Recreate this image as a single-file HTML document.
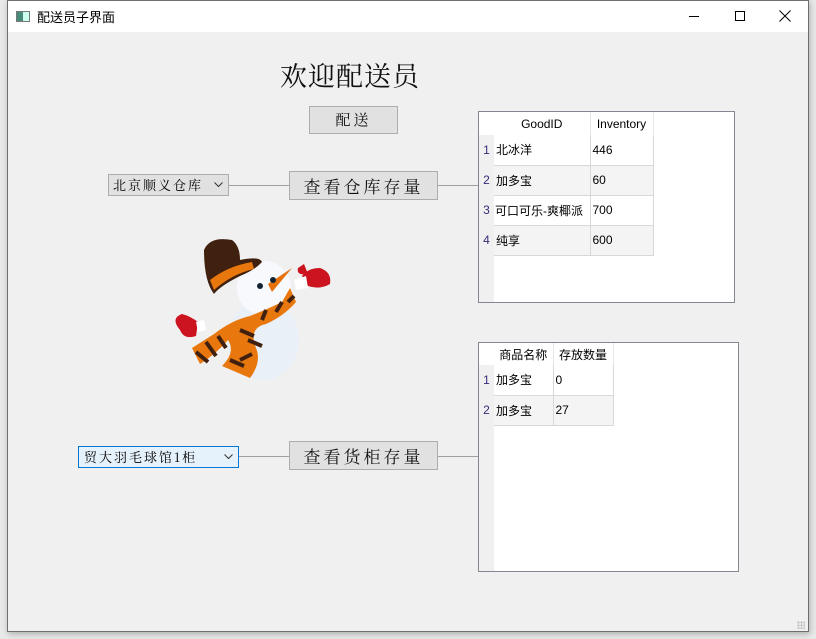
<!DOCTYPE html>
<html><head><meta charset="utf-8"><style>
body{margin:0;width:816px;height:639px;background:#e9e9e9;position:relative;overflow:hidden;font-family:"Liberation Sans","Noto Sans CJK SC",sans-serif;}
.win{position:absolute;left:7px;top:0;width:800px;height:630px;border:1px solid #6f6f6f;background:#f0f0f0;box-shadow:1px 2px 6px rgba(0,0,0,.25);}
.tb{position:absolute;left:0;top:0;width:800px;height:31px;background:#fff;}
.ab{position:absolute;box-sizing:border-box;}
.k{font-family:"Noto Serif CJK SC","AR PL UKai CN",serif;}
.btn{position:absolute;box-sizing:border-box;border:1px solid #adadad;background:#e1e1e1;text-align:center;color:#111;}
.ln{position:absolute;height:1px;background:#a0a0a0;}
table{border-collapse:collapse;font-size:12px;table-layout:fixed;}
td{box-sizing:border-box;padding:0 0 0 2px;border-right:1px solid #d8d8d8;border-bottom:1px solid #d8d8d8;color:#000;white-space:nowrap;overflow:hidden;}
th{font-weight:normal;font-size:12px;border-right:1px solid #e8e8e8;background:#fff;padding:0;}
.vh{background:#f0f0f0;border:none;color:#3a2a7a;padding:0;text-align:center;}
.chev{position:absolute;right:5px;top:7px;}
</style></head><body>
<div class="win">
 <div class="tb">
  <div class="ab" style="left:8px;top:10px;width:14px;height:11px;border:1px solid #777;background:linear-gradient(90deg,#4a8a7a 0 50%,#cfe 50%);"></div>
  <div class="ab" style="left:29px;top:6px;font-size:13px;color:#000;">配送员子界面</div>
  <div class="ab" style="left:681px;top:15px;width:10px;height:1px;background:#000;"></div>
  <div class="ab" style="left:727px;top:10px;width:10px;height:10px;border:1px solid #000;"></div>
  <svg class="ab" style="left:771px;top:9px" width="12" height="12"><path d="M0.5 0.5L11.5 11.5M11.5 0.5L0.5 11.5" stroke="#000" stroke-width="1"/></svg>
 </div>
</div>
<div class="ab k" style="left:280px;top:55px;font-size:27px;letter-spacing:1px;color:#111;">欢迎配送员</div>
<div class="btn k" style="left:309px;top:106px;width:89px;height:28px;font-size:15px;line-height:26px;letter-spacing:3px;">配送</div>

<div class="ab k" style="left:108px;top:174px;width:121px;height:22px;border:1px solid #adadad;background:#e1e1e1;font-size:13px;line-height:20px;padding-left:4px;letter-spacing:2px;">北京顺义仓库<svg class="chev" width="9" height="6"><path d="M0.5 0.5L4.5 4.5L8.5 0.5" stroke="#333" fill="none"/></svg></div>
<div class="ln" style="left:229px;top:185px;width:60px;"></div>
<div class="btn k" style="left:289px;top:171px;width:149px;height:29px;font-size:17px;line-height:27px;letter-spacing:3px;">查看仓库存量</div>
<div class="ln" style="left:438px;top:185px;width:40px;"></div>

<div class="ab k" style="left:78px;top:446px;width:161px;height:22px;border:1px solid #0078d7;background:#e5f1fb;font-size:13px;line-height:20px;padding-left:5px;letter-spacing:2px;">贸大羽毛球馆1柜<svg class="chev" width="9" height="6"><path d="M0.5 0.5L4.5 4.5L8.5 0.5" stroke="#333" fill="none"/></svg></div>
<div class="ln" style="left:239px;top:456px;width:50px;"></div>
<div class="btn k" style="left:289px;top:441px;width:149px;height:29px;font-size:17px;line-height:27px;letter-spacing:3px;">查看货柜存量</div>
<div class="ln" style="left:438px;top:456px;width:40px;"></div>

<div class="ab" style="left:478px;top:111px;width:257px;height:192px;border:1px solid #828790;background:#fff;">
 <div class="ab" style="left:0;top:0;width:15px;height:190px;background:#f0f0f0;"></div>
 <table class="ab" style="left:0;top:0;width:174px;">
  <colgroup><col style="width:15px"><col style="width:96px"><col style="width:63px"></colgroup>
  <tr style="height:23px"><th class="vh" style="background:#fff"></th><th>GoodID</th><th>Inventory</th></tr>
  <tr style="height:30px"><td class="vh">1</td><td>北冰洋</td><td>446</td></tr>
  <tr style="height:30px;background:#f4f4f4"><td class="vh">2</td><td>加多宝</td><td>60</td></tr>
  <tr style="height:30px"><td class="vh">3</td><td style="padding-left:1px">可口可乐-爽椰派</td><td>700</td></tr>
  <tr style="height:30px;background:#f4f4f4"><td class="vh">4</td><td>纯享</td><td>600</td></tr>
 </table>
</div>
<div class="ab" style="left:478px;top:342px;width:261px;height:230px;border:1px solid #828790;background:#fff;">
 <div class="ab" style="left:0;top:0;width:15px;height:228px;background:#f0f0f0;"></div>
 <table class="ab" style="left:0;top:0;width:134px;">
  <colgroup><col style="width:15px"><col style="width:59px"><col style="width:60px"></colgroup>
  <tr style="height:22px"><th class="vh" style="background:#fff"></th><th>商品名称</th><th>存放数量</th></tr>
  <tr style="height:30px"><td class="vh">1</td><td>加多宝</td><td>0</td></tr>
  <tr style="height:30px;background:#f4f4f4"><td class="vh">2</td><td>加多宝</td><td>27</td></tr>
 </table>
</div>

<svg class="ab" style="left:170px;top:236px" width="165" height="150" viewBox="0 0 165 150">
 <ellipse cx="93" cy="104" rx="36" ry="40" fill="#eaf0f8"/>
 <circle cx="94" cy="52" r="27" fill="#f7f9fc"/>
 <path d="M34 14 Q40 0 62 4 Q70 10 70 24 Q90 20 92 26 Q85 34 70 40 Q50 50 44 58 Q34 45 34 14Z" fill="#40200e"/>
 <path d="M40 44 Q58 30 82 26 L84 33 Q62 38 44 54Z" fill="#e8780e"/>
 <path d="M98 48 L122 32 L102 56Z" fill="#e8700a"/>
 <circle cx="90" cy="50" r="3" fill="#123"/><circle cx="103" cy="44" r="3" fill="#123"/>
 <path d="M44 98 Q62 84 80 80 Q100 72 112 66 L120 52 L126 66 Q114 80 96 88 Q78 92 86 112 Q92 126 80 142 L52 130 Q66 116 58 104 Q46 118 30 128 L22 112 Z" fill="#e8780e"/>
 <path d="M26 116 L38 126 M36 106 L46 120 M48 100 L56 112 M70 94 L84 100 M78 104 L92 110 M82 118 L70 124 M74 130 L60 124 M92 84 L96 74 M106 76 L112 66 M118 66 L124 60" stroke="#40200e" stroke-width="4"/>
 <path d="M10 94 Q0 82 12 78 Q20 80 28 86 L26 100 Q14 104 10 94Z" fill="#cc1420"/>
 <path d="M26 86 L34 84 L36 94 L28 96Z" fill="#fff"/>
 <path d="M132 40 Q138 32 150 32 Q162 36 160 48 Q150 54 138 50Z" fill="#cc1420"/>
 <path d="M128 32 Q126 40 138 38 L134 28Z" fill="#cc1420"/>
 <path d="M124 44 L136 40 L138 52 L126 54Z" fill="#fff"/>
</svg>
<div class="ab" style="left:797px;top:621px;width:8px;height:8px;background:radial-gradient(circle,#bbb 1px,transparent 1.2px) 0 0/3px 3px;"></div>
</body></html>
